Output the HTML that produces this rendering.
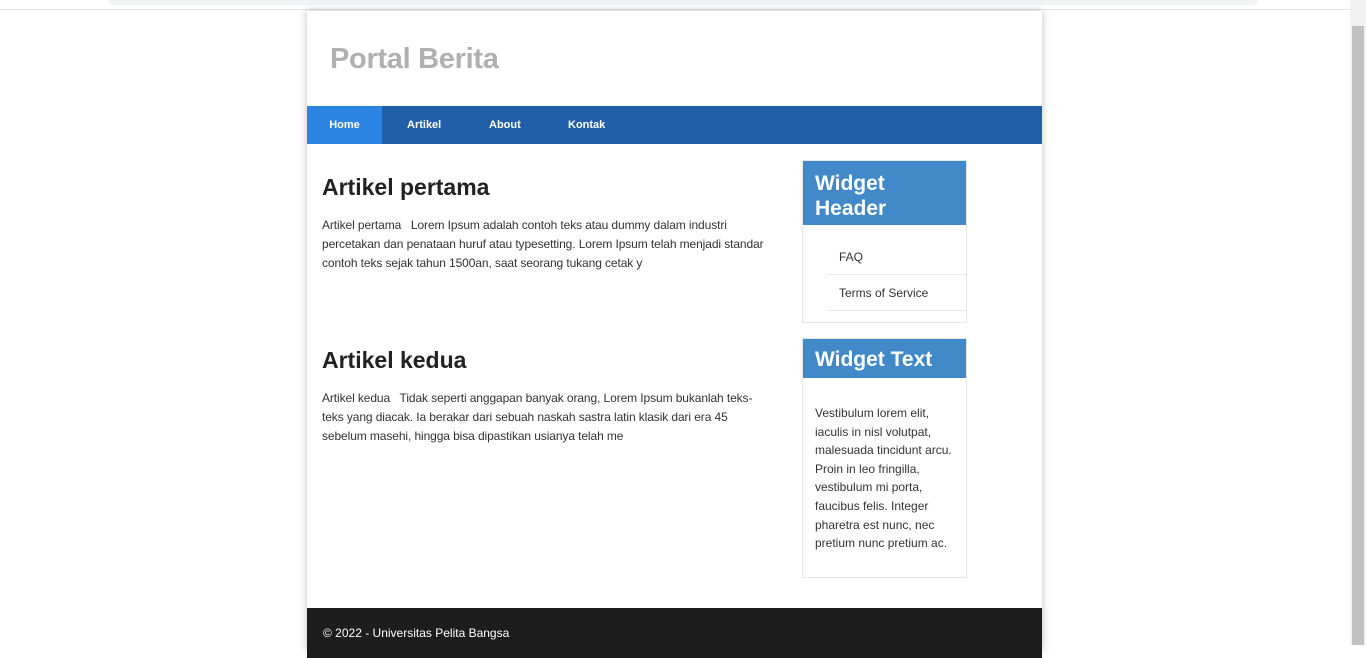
<!DOCTYPE html>
<html><head><style>
*{margin:0;padding:0;box-sizing:border-box}
html,body{width:1366px;height:645px;overflow:hidden;background:#fff;font-family:"Liberation Sans",sans-serif}
.top{position:absolute;left:0;top:0;width:1350px;height:10px;background:#fff;border-bottom:1px solid #e3e3e3}
.top div{position:absolute;left:108px;top:0;width:1150px;height:5px;background:#f1f3f4;border-radius:0 0 6px 6px}
.sb{position:absolute;left:1350px;top:0;width:16px;height:645px;background:#f1f1f1}
.sb div{position:absolute;left:2px;top:26px;width:12px;height:619px;background:#c1c1c1}
.wrap{position:absolute;left:307px;top:11px;width:735px;height:640px;background:#fff;box-shadow:0 0 8px rgba(0,0,0,.25)}
h1{position:absolute;left:23px;top:32px;font-size:29px;color:#b0b0b0;font-weight:bold;letter-spacing:-.3px}
nav{position:absolute;left:0;top:95px;width:735px;height:38px;background:#2160a9}
nav a{position:absolute;top:0;height:38px;line-height:38px;color:#fff;font-size:11px;font-weight:bold}
.art{position:absolute;left:15px;width:450px}
.art h2{font-size:23px;color:#222;margin-bottom:15px}
.art p{font-size:12px;line-height:19px;color:#333;letter-spacing:-.1px}
.w{position:absolute;left:495px;width:165px;border:1px solid #e5e5e5}
.w h3{background:#4189c8;color:#fff;font-size:21px;line-height:25px;padding:10px 12px 4px}
.w li{list-style:none;margin-left:24px;border-bottom:1px solid #e8e8e8;font-size:12px;color:#333;padding:11px 12px 10px}
.w p{font-size:12px;line-height:18.6px;color:#333;padding:26px 12px 23px}
footer{position:absolute;left:0;top:597px;width:735px;height:50px;background:#1d1d1d;color:#fff;font-size:12px;padding:18px 16px}
</style></head><body>
<div class="top"><div></div></div>
<div class="sb"><div></div></div>
<div class="wrap">
<h1>Portal Berita</h1>
<nav><a style="left:0;width:75px;background:#2b83e2;text-align:center">Home</a><a style="left:100px">Artikel</a><a style="left:182px">About</a><a style="left:261px">Kontak</a></nav>
<div class="art" style="top:163px"><h2>Artikel pertama</h2><p>Artikel pertama &nbsp; Lorem Ipsum adalah contoh teks atau dummy dalam industri percetakan dan penataan huruf atau typesetting. Lorem Ipsum telah menjadi standar contoh teks sejak tahun 1500an, saat seorang tukang cetak y</p></div>
<div class="art" style="top:336px"><h2>Artikel kedua</h2><p>Artikel kedua &nbsp; Tidak seperti anggapan banyak orang, Lorem Ipsum bukanlah teks-teks yang diacak. Ia berakar dari sebuah naskah sastra latin klasik dari era 45 sebelum masehi, hingga bisa dipastikan usianya telah me</p></div>
<div class="w" style="top:149px;height:163px"><h3>Widget Header</h3><ul style="margin-top:14px"><li>FAQ</li><li>Terms of Service</li></ul></div>
<div class="w" style="top:327px;height:240px"><h3 style="padding:8px 12px 6px">Widget Text</h3><p>Vestibulum lorem elit, iaculis in nisl volutpat, malesuada tincidunt arcu. Proin in leo fringilla, vestibulum mi porta, faucibus felis. Integer pharetra est nunc, nec pretium nunc pretium ac.</p></div>
<footer>© 2022 - Universitas Pelita Bangsa</footer>
</div>
</body></html>
